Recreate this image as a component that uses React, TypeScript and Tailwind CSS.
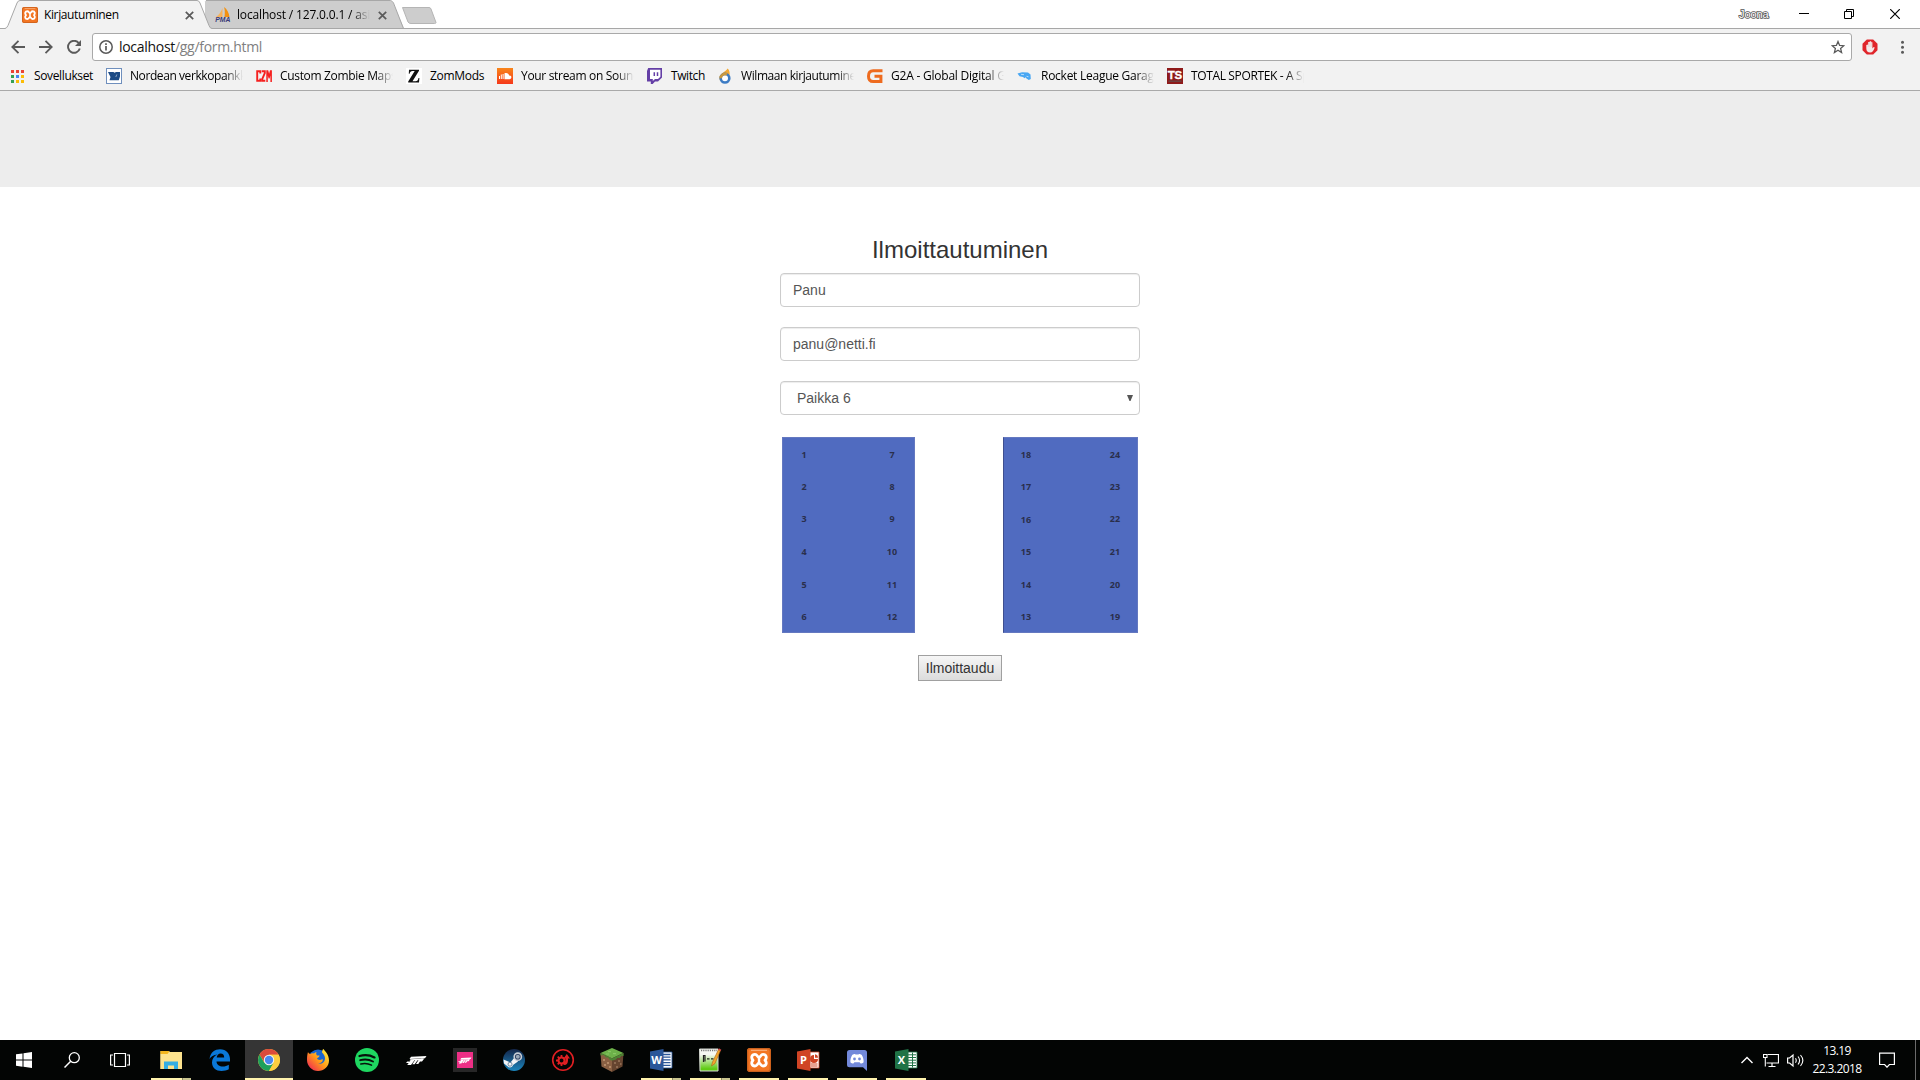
import React from "react";

type IconProps = { children: React.ReactNode; size?: number; box?: string; className?: string };

function Icon({ children, size = 16, box, className = "" }: IconProps) {
  return (
    <svg width={size} height={size} viewBox={box ?? `0 0 ${size} ${size}`} fill="none" className={`block shrink-0 ${className}`}>
      {children}
    </svg>
  );
}

const FADE = "[mask-image:linear-gradient(to_right,#000_calc(100%-18px),transparent)]";

/* ---------- small icons ---------- */

function XamppMark() {
  return (
    <g>
      <rect width="24" height="24" rx="3" fill="#f37623" />
      <rect x=".7" y=".7" width="22.6" height="22.6" rx="2.5" stroke="#c9601c" strokeWidth="1.2" />
      <path d="M4 2.3h16" stroke="#fbb98a" strokeWidth="1" />
      <path
        d="M8 6.300C10.300 6.300 10.300 9.200 12 9.200C13.700 9.200 13.700 6.300 16 6.300C19.400 6.300 20.200 9.800 18 12.200C20.200 14.600 19.400 18 16 18C13.700 18 13.700 15.200 12 15.200C10.300 15.200 10.300 18 8 18C4.600 18 3.800 14.600 6 12.200C3.800 9.800 4.600 6.300 8 6.300Z"
        stroke="#fff"
        strokeWidth="2.800"
        strokeLinejoin="round"
      />
      <path d="M12 9v6" stroke="#fff" strokeWidth="2.400" />
    </g>
  );
}

function CloseX() {
  return (
    <Icon size={9}>
      <path d="M.8.8l7.4 7.4M8.2.8L.8 8.2" stroke="#5a5a5a" strokeWidth="1.7" />
    </Icon>
  );
}

const bookmarks: { label: string; icon: React.ReactNode; width: string; track: string; fade?: boolean }[] = [
  {
    label: "Nordean verkkopankki",
    width: "w-[113px]",
    track: "tracking-[-0.42px]",
    fade: true,
    icon: (
      <Icon>
        <rect x=".5" y=".5" width="15" height="15" fill="#fff" stroke="#6f8fbd" />
        <path d="M2 4h5.500l1 .700L10 4h4v4.500l-1.200 3.700H3.500L4.500 9z" fill="#1d4b86" />
        <path d="M10.800 6.500L9.800 9" stroke="#fff" strokeWidth=".5" />
      </Icon>
    ),
  },
  {
    label: "Custom Zombie Maps",
    width: "w-[113px]",
    track: "tracking-[-0.33px]",
    fade: true,
    icon: (
      <Icon>
        <path d="M4.300 5.500V3.200H1.200v9.600h3.100v-2.300M5.800 3.200h3V5L6.300 11v1.800h3" stroke="#f5201f" strokeWidth="1.900" />
        <path d="M10.300 14V2.200h1.900l.900 3.500.900-3.500h1.900V14h-1.500V7.500l-.800 3h-1l-.800-3V14z" fill="#f5201f" />
      </Icon>
    ),
  },
  {
    label: "ZomMods",
    width: "w-[54px]",
    track: "tracking-[-0.3px]",
    icon: (
      <Icon>
        <rect width="16" height="16" fill="#fff" />
        <path d="M3 1.700h10v1L6.500 13.200H9.500c1.800 0 2.600-1 3-3.200h.9L13 14.600H2.200v-1L8.700 3H6.500C4.800 3 4 3.900 3.600 5.800h-.8z" fill="#111" />
      </Icon>
    ),
  },
  {
    label: "Your stream on SoundCloud",
    width: "w-[113px]",
    track: "tracking-[-0.32px]",
    fade: true,
    icon: (
      <Icon>
        <defs>
          <linearGradient id="sc" x1="0" y1="0" x2="0" y2="1">
            <stop stopColor="#f8851b" />
            <stop offset="1" stopColor="#f5381a" />
          </linearGradient>
        </defs>
        <rect width="16" height="16" fill="url(#sc)" />
        <path d="M2.500 8v3M4.300 6.500V11M6.100 6V11" stroke="#fff" />
        <path d="M7.500 11.200V5.300c2.400-1 4.300.3 4.600 2.300 3-.6 2.900 3.600.4 3.600z" fill="#fff" />
      </Icon>
    ),
  },
  {
    label: "Twitch",
    width: "w-[33px]",
    track: "tracking-[-0.4px]",
    icon: (
      <Icon>
        <path d="M1.200 0H15v9.500L11 13.500H8L5.700 16H3.800v-2.500H0V3z" fill="#643fa6" />
        <path d="M3 1.800h10.400v7L11 11H8l-2.200 2V11H3z" fill="#fff" />
        <path d="M7.300 4.300v3.800M10.500 4.300v3.800" stroke="#643fa6" strokeWidth="1.500" />
      </Icon>
    ),
  },
  {
    label: "Wilmaan kirjautuminen",
    width: "w-[113px]",
    track: "tracking-[-0.42px]",
    fade: true,
    icon: (
      <Icon>
        <path d="M10.500.5C10 2.500 7 3.500 4.800 5.500 2 8 2.200 11 3.200 12.800L12.500 7C13 5 12.500 2 10.500.5z" fill="#f1a835" />
        <circle cx="8" cy="10.200" r="4.300" fill="#fff" stroke="#3d7cc4" strokeWidth="2.600" />
        <path d="M3.700 10.200A4.300 4.300 0 0 1 10 6.400" stroke="#c9983f" strokeWidth="2.600" />
      </Icon>
    ),
  },
  {
    label: "G2A - Global Digital Gaming",
    width: "w-[113px]",
    track: "tracking-[-0.22px]",
    fade: true,
    icon: (
      <Icon>
        <path d="M15.500 2.800H6.200C3 2.800 1.500 4.800 1.500 8.200s1.500 5.300 4.700 5.300h7.700V8.200H7.500" stroke="#ee6b1f" strokeWidth="3" />
      </Icon>
    ),
  },
  {
    label: "Rocket League Garage",
    width: "w-[113px]",
    track: "tracking-[-0.26px]",
    fade: true,
    icon: (
      <Icon>
        <path d="M.5 5.500L5 4.200l6 .300 2.500 2 .300 4.500-2 1-2.300-1.500-1-1.200-1 1-1.500-1.300L2.500 8.300z" fill="#49a7f3" />
        <path d="M4 6.300l3 .4M9.500 8.300l2 .5" stroke="#b4dbfa" />
      </Icon>
    ),
  },
  {
    label: "TOTAL SPORTEK - A Sports",
    width: "w-[113px]",
    track: "tracking-[-0.36px]",
    fade: true,
    icon: (
      <Icon>
        <rect width="16" height="16" fill="#8f1a1a" />
        <text x="7.800" y="11" textAnchor="middle" fontFamily="Liberation Sans" fontWeight="700" fontSize="11.500" fill="#fff" stroke="#fff" strokeWidth=".3" letterSpacing="-.4">
          TS
        </text>
        <path d="M1.500 13.200h13" stroke="#6d4444" strokeWidth="1.500" />
      </Icon>
    ),
  },
];

/* ---------- browser chrome ---------- */

function TabStrip() {
  return (
    <div className="relative flex h-[29px] items-start bg-white">
      <svg width="1920" height="29" viewBox="0 0 1920 29" fill="none" className="absolute left-0 top-0">
        <path d="M205 1.500L206 .500H390.500L393 2.500L404 28.500H205z" fill="#cdcdcd" />
        <path d="M0 28.500H1920" stroke="#a7a7a7" />
        <path d="M206 .500H390.500Q392.500 1 393.500 3L403.500 28.500H211" stroke="#a7a7a7" />
        <path d="M0 28.500H5Q7 28 8 25.500L17 3Q18 .500 20 .500H197Q199 .500 200 3L209 25.500Q210 28.500 212 28.500V29.500H0z" fill="#f2f2f2" />
        <path d="M0 28.500H5Q7 28 8 25.500L17 3Q18 .500 20 .500H197Q199 .500 200 3L209 25.500Q210 28.500 212 28.500" stroke="#a7a7a7" />
        <path d="M402.500 7.500H429Q430.500 7.500 431 9L436 22.500Q436 23.500 434.500 23.500H411Q409 23.500 408 22z" fill="#cdcdcd" stroke="#b5b5b5" />
      </svg>
      <div className="relative flex h-[29px] w-[194px] items-center pl-[22px] pt-px">
        <Icon box="0 0 24 24">
          <XamppMark />
        </Icon>
        <span className="ml-[6px] w-[141px] text-[12px] tracking-[-0.38px]">Kirjautuminen</span>
        <CloseX />
      </div>
      <div className="relative ml-[21px] flex h-[29px] w-[178px] items-center pt-px">
        <Icon>
          <path d="M7.500 1v9H1C4 8 6 5 7.500 1z" fill="#f7b35c" />
          <path d="M9 0c3 2 5 6 5.500 10H9.500C10 6 10 3 9 0z" fill="#f29111" />
          <text x="7.800" y="15.400" textAnchor="middle" fontFamily="Liberation Sans" fontStyle="italic" fontWeight="700" fontSize="6.800" fill="#3a3a78">
            PMA
          </text>
        </Icon>
        <span className={`ml-[6px] w-[133px] overflow-hidden whitespace-nowrap text-[12px] tracking-[-0.16px] ${FADE}`}>
          localhost / 127.0.0.1 / asiakas
        </span>
        <span className="ml-[8px]">
          <CloseX />
        </span>
      </div>
      <div className="relative ml-auto flex h-[28px] items-center">
        <span className="mr-[29px] w-[31px] font-['Liberation_Sans',sans-serif] text-[11px] tracking-[-0.1px] text-white [-webkit-text-stroke:1.6px_#555] [paint-order:stroke_fill]">Joona</span>
        <Icon size={10}>
          <path d="M0 4.500h10" stroke="#000" />
        </Icon>
        <Icon size={10} className="ml-[35px]">
          <path d="M.500 2.500h7v7h-7zM2.500 2.500v-2h7v7h-2" stroke="#000" />
        </Icon>
        <Icon size={10} className="ml-[36px] mr-[20px]">
          <path d="M.200.200l9.600 9.600M9.800.200L.200 9.800" stroke="#000" strokeWidth="1.200" />
        </Icon>
      </div>
    </div>
  );
}

function Toolbar() {
  return (
    <div className="flex h-[36px] items-center bg-[#f2f2f2] pl-[11px]">
      <Icon size={14}>
        <path d="M14 7H1.500M7.500.800L1.300 7l6.200 6.200" stroke="#5a5a5a" strokeWidth="1.800" />
      </Icon>
      <Icon size={14} className="ml-[14px]">
        <path d="M0 7h12.500M6.500.800L12.700 7l-6.200 6.200" stroke="#5a5a5a" strokeWidth="1.800" />
      </Icon>
      <Icon size={14} className="ml-[14px]">
        <path d="M11.700 3A6 6 0 1 0 12.800 8.500" stroke="#5a5a5a" strokeWidth="1.900" />
        <path d="M14 0v6H8z" fill="#5a5a5a" />
      </Icon>
      <div className="ml-[11px] flex h-[28px] w-[1760px] items-center rounded-[3px] border border-[#a9a9a9] bg-white pl-[6px] pr-[6px]">
        <Icon size={14}>
          <circle cx="7" cy="7" r="6.200" stroke="#5a5a5a" strokeWidth="1.500" />
          <path d="M7 6v4.500M7 3.300v1.600" stroke="#5a5a5a" strokeWidth="1.700" />
        </Icon>
        <span className="ml-[6px] text-[14px] leading-none tracking-[-0.3px] text-[#111]">
          localhost<span className="text-[#808080]">/gg/form.html</span>
        </span>
        <Icon size={14} className="ml-auto">
          <path d="M7 1.500l1.600 3.900 4.200.300-3.200 2.700 1 4.100L7 10.300l-3.600 2.200 1-4.100L1.200 5.700l4.200-.300z" stroke="#5a5a5a" strokeWidth="1.300" />
        </Icon>
      </div>
      <Icon className="ml-[10px]">
        <path d="M4.800.500h6.400l4.300 4.300v6.400l-4.300 4.300H4.800L.500 11.200V4.800z" fill="#e0252b" />
        <path d="M4.300 6v3.200c0 3 1.500 4.300 3.800 4.300 2.500 0 3.300-1.500 4.600-5l-1-.500-1.300 1.500V3.300H9.200V2.300H7.700V3H6.200v2.500z" fill="#f4eaea" />
        <path d="M6.300 4v4M7.900 3v5M9.400 4v4" stroke="#e5b3b3" strokeWidth=".4" />
      </Icon>
      <Icon size={14} className="ml-[17px]">
        <circle cx="7.500" cy="2.300" r="1.500" fill="#5a5a5a" />
        <circle cx="7.500" cy="7.300" r="1.500" fill="#5a5a5a" />
        <circle cx="7.500" cy="12.300" r="1.500" fill="#5a5a5a" />
      </Icon>
    </div>
  );
}

function Bookmarks() {
  const colors = ["#ea4335", "#ea4335", "#ea4335", "#34a053", "#4285f4", "#fbbc05", "#34a053", "#fbbc05", "#fbbc05"];
  return (
    <div className="flex h-[26px] items-center border-b border-[#a9a9a9] bg-[#f2f2f2] pb-[3px] pl-[11px] text-[12px] leading-[16px] text-black">
      <Icon size={13}>
        {colors.map((c, i) => (
          <rect key={i} x={(i % 3) * 5} y={Math.floor(i / 3) * 5} width="3" height="3" fill={c} />
        ))}
      </Icon>
      <span className="ml-[10px] w-[59px] whitespace-nowrap tracking-[-0.36px]">Sovellukset</span>
      {bookmarks.map((b) => (
        <div key={b.label} className="ml-[13px] flex items-center gap-[8px]">
          {b.icon}
          <span className={`whitespace-nowrap ${b.width} ${b.track} ${b.fade ? `overflow-hidden ${FADE}` : ""}`}>{b.label}</span>
        </div>
      ))}
    </div>
  );
}

/* ---------- page ---------- */

const ROWS = ["h-[33px]", "h-[31px]", "h-[34px]", "h-[32px]", "h-[33px]", "h-[31px]"];

function SeatColumn({ seats, className = "" }: { seats: number[]; className?: string }) {
  return (
    <div className={`flex w-[20px] flex-col text-center font-['Open_Sans',sans-serif] text-[9px] leading-[12px] font-bold text-[#2a2f4c] ${className}`}>
      {seats.map((s, i) => (
        <span key={s} className={`flex items-center justify-center ${ROWS[i]}`}>
          {s}
        </span>
      ))}
    </div>
  );
}

function SignupForm() {
  const field = "flex h-[34px] w-full items-center rounded-[4px] border border-[#ccc] bg-white text-[14px] text-[#555] shadow-[inset_0_1px_1px_rgba(0,0,0,0.075)]";
  return (
    <main className="flex flex-1 flex-col items-center bg-white pt-[50px] font-['Liberation_Sans',Arial,sans-serif]">
      <div className="flex w-[360px] flex-col items-center">
        <h3 className="mb-[10px] text-[24px] leading-[26px] text-[#333]">Ilmoittautuminen</h3>
        <div className={`${field} mb-[20px] px-[12px]`}>Panu</div>
        <div className={`${field} mb-[20px] px-[12px]`}>panu@netti.fi</div>
        <div className={`${field} justify-between pl-[16px] pr-[6px]`}>
          Paikka 6
          <Icon size={6}>
            <path d="M0 0h6L3.500 6h-1z" fill="#555" />
          </Icon>
        </div>
        <div className="mt-[22px] flex h-[196px] w-full justify-between pl-[2px] pr-[2px]">
          <div className="flex w-[133px] justify-between border border-[#6478c0] bg-[#506bc0] pl-[11px] pr-[12px]">
            <SeatColumn seats={[1, 2, 3, 4, 5, 6]} />
            <SeatColumn seats={[7, 8, 9, 10, 11, 12]} />
          </div>
          <div className="flex w-[135px] justify-between border border-[#6478c0] border-l-[#3f4f8f] bg-[#506bc0] pl-[12px] pr-[12px]">
            <SeatColumn seats={[18, 17, 16, 15, 14, 13]} className="pt-px" />
            <SeatColumn seats={[24, 23, 22, 21, 20, 19]} />
          </div>
        </div>
        <button className="mt-[22px] h-[26px] w-[84px] border border-[#a0a0a0] bg-linear-to-b from-[#f6f6f6] to-[#dcdcdc] text-[14px] leading-none text-[#333]">
          Ilmoittaudu
        </button>
      </div>
    </main>
  );
}

/* ---------- taskbar ---------- */

function OfficeIcon({ letter, dark, light, children }: { letter: string; dark: string; light: string; children: React.ReactNode }) {
  return (
    <Icon size={24}>
      <path d="M12 4h11v16H12z" fill="#fff" stroke={light} strokeWidth=".8" />
      {children}
      <path d="M1 3.500L14.500 1v22L1 20.500z" fill={dark} />
      <text x="7.500" y="16" textAnchor="middle" fontFamily="Open Sans" fontWeight="700" fontSize="11" fill="#fff">
        {letter}
      </text>
    </Icon>
  );
}

/* Slanted double-bar "F" with two trailing strokes. */
function ForzaMark({ scale, x, y }: { scale: number; x: number; y: number }) {
  return (
    <g transform={`translate(${x} ${y}) scale(${scale})`} fill="#fff">
      <path d="M5 .800L20.500 0 19 2.300 3.500 2.900z" />
      <path d="M4.500 3.200L17 2.600 15 4.300H8.500L5 9H1.200l1.500-2H0l1.300-1.500h2.500l.8-1H3.500z" />
      <path d="M9.200 4L11.700 4 8.700 8.300H6.300zM12.500 4H15l-2.700 4H10zM15.500 2.500h2.800L16 5.500h-2.500z" />
    </g>
  );
}

const tasks: { name: string; icon: React.ReactNode; open?: boolean; multi?: boolean; active?: boolean }[] = [
  {
    name: "explorer",
    open: true,
    multi: true,
    icon: (
      <Icon size={24}>
        <path d="M1.500 3h8.500l1.500 1.500H23V21H1.500z" fill="#fde38e" />
        <path d="M1.500 3h8.500v3H1.500z" fill="#f3b61f" />
        <path d="M1.500 6h7l1.500-2h13v17H1.500z" fill="#fde38e" />
        <path d="M5 21v-7.500h14V21h-4v-3.500H9V21z" fill="#35aee4" />
      </Icon>
    ),
  },
  {
    name: "edge",
    icon: (
      <Icon size={24}>
        <path
          d="M1.500 11C2.500 4 7 1.200 12 1.200c6.500 0 10 4.800 10 9.800v2.500H8.500c.2 3.500 3 5 6.300 5 2.200 0 4.200-.700 6-1.800v4.600c-2 1.200-4.500 1.700-7.300 1.700C8 23 4 19.700 4 14.500c0-3.700 2-6.500 5.500-8C5.500 6.700 3 8.500 1.500 11zm7.200-1.500h7.500c0-2.500-1.200-4-3.700-4-2.100 0-3.500 1.700-3.800 4z"
          fill="#0a78d7"
        />
      </Icon>
    ),
  },
  {
    name: "chrome",
    open: true,
    active: true,
    icon: (
      <Icon size={24}>
        <circle cx="12" cy="12" r="11" fill="#fccd3f" />
        <path d="M2.500 6.500A11 11 0 0 1 21.600 6.800H12L7.500 14.600z" fill="#db4a3b" />
        <path d="M2.500 6.500L7.300 14.700h9.400L12 23A11 11 0 0 1 2.500 6.500z" fill="#1da05c" />
        <path d="M21.600 6.800H12l4.700 7.900L12 23A11 11 0 0 0 21.600 6.800z" fill="#fccd3f" />
        <circle cx="12" cy="12" r="5.200" fill="#f4f4f4" />
        <circle cx="12" cy="12" r="4.200" fill="#4a87ee" />
      </Icon>
    ),
  },
  {
    name: "firefox",
    icon: (
      <Icon size={24}>
        <defs>
          <linearGradient id="ff" x1="1" y1="0" x2="0" y2="1">
            <stop offset=".1" stopColor="#ffe83b" />
            <stop offset=".5" stopColor="#ff9a1a" />
            <stop offset="1" stopColor="#ee1260" />
          </linearGradient>
        </defs>
        <circle cx="12" cy="11" r="9.500" fill="#1766d2" />
        <path
          d="M2 4c.5 1 1 1.500 2 2 1-.700 2.400-.800 4-.500.800-.800 1.500-1.200 2.500-1.500-.6 1.500-.2 2.500.5 3.500h2.500c0 1.400-1.500 2-2.500 3 .5 1.700 3.500 1.800 5.500.5 1 2.500-1.500 4.500-4.500 4.300 3 1.500 6.500-.800 7-4.300.3-3-1.500-5-3-6.500 0-1.500.5-3 1.500-3.500 1 2 5.500 5 5.500 11.500C23 18.500 18 23 12 23S1 18 1 12c0-3 .2-5.500 1-8z"
          fill="url(#ff)"
        />
      </Icon>
    ),
  },
  {
    name: "spotify",
    icon: (
      <Icon size={24}>
        <circle cx="12" cy="12" r="12" fill="#1ed760" />
        <path d="M4.500 8c5-1.500 10.500-1 15 1.400" stroke="#07120b" strokeWidth="2.300" strokeLinecap="round" />
        <path d="M5.200 12.200c4.300-1.300 9-.8 12.800 1.300" stroke="#07120b" strokeWidth="1.900" strokeLinecap="round" />
        <path d="M5.800 16c3.800-1 7.400-.6 10.700 1.200" stroke="#07120b" strokeWidth="1.500" strokeLinecap="round" />
      </Icon>
    ),
  },
  {
    name: "forza",
    icon: (
      <Icon size={24}>
        <ForzaMark scale={1} x={2} y={8} />
      </Icon>
    ),
  },
  {
    name: "forza hub",
    icon: (
      <Icon size={24}>
        <path d="M0 0h24v24H0z" fill="#272727" />
        <path d="M4 4h16v16H4z" fill="#ee2f86" />
        <ForzaMark scale={0.66} x={5} y={9.5} />
      </Icon>
    ),
  },
  {
    name: "steam",
    icon: (
      <Icon size={24}>
        <defs>
          <linearGradient id="st" x1="0" y1="0" x2="0" y2="1">
            <stop stopColor="#14264a" />
            <stop offset="1" stopColor="#1b86bd" />
          </linearGradient>
        </defs>
        <circle cx="12" cy="12" r="11" fill="url(#st)" />
        <path d="M1.500 11.500l7 3 4-5 3.500 4-5 3.500c-.5 2.300-3.500 3.500-5.500 1.300L2 15.500z" fill="#f2f4f6" />
        <circle cx="15.800" cy="8.700" r="3.600" fill="#22355a" stroke="#c6ced6" strokeWidth="1.600" />
        <circle cx="15.800" cy="8.700" r="2" fill="#9aa9b8" />
        <circle cx="8" cy="16.200" r="2" stroke="#52708d" strokeWidth=".8" />
      </Icon>
    ),
  },
  {
    name: "tuner",
    icon: (
      <Icon size={24}>
        <circle cx="12" cy="12" r="10.300" stroke="#e01f22" strokeWidth="1.600" />
        <circle cx="10.500" cy="12.500" r="3" stroke="#e01f22" strokeWidth="2" />
        <path d="M10.500 7v2M10.500 16v2M5 12.500H7.500M6.700 8.700l1.500 1.500M6.700 16.300l1.500-1.500" stroke="#e01f22" strokeWidth="1.800" />
        <path d="M12.500 17c3 .5 4.500-1.800 4.500-4.500V10.500h2L15.800 6 12.500 10.500H14.500c0 2 0 3.500-2 4.500z" fill="#e01f22" />
      </Icon>
    ),
  },
  {
    name: "minecraft",
    icon: (
      <Icon size={24}>
        <path d="M12 0l11.500 5L12 10.500.500 5z" fill="#6db14a" />
        <path d="M.500 5L12 10.500V24L1.500 18.500z" fill="#8a6043" />
        <path d="M23.500 5L12 10.500V24l10.500-5.500z" fill="#664530" />
        <path d="M.500 5L12 10.500l11.500-5.500v3l-2-.2-2 2.200-2-.200-2 2-3.500.700-2-.500-2-2.500-2 0-2-2.200H.500z" fill="#4c8434" />
        <path d="M3 11h2v2H3zM7 14h2v2H7zM4 16h2v2H4zM9 18h2v2H9z" fill="#b48a68" />
        <path d="M14 14h2v2h-2zM18 12h2v2h-2zM16 18h2v2h-2zM20 15h1.500v2H20z" fill="#8d6a50" />
        <path d="M8 3h3v1.300H8zM13 5h3v1.200h-3zM6 5.500h3v1H6z" fill="#87c763" />
      </Icon>
    ),
  },
  {
    name: "word",
    open: true,
    multi: true,
    icon: (
      <OfficeIcon letter="W" dark="#2a5699" light="#2a5699">
        <path d="M14 6.500h7.500M14 9.200h7.500M14 11.900h7.500M14 14.600h7.500M14 17.300h7.500" stroke="#2a5699" strokeWidth="1.300" />
      </OfficeIcon>
    ),
  },
  {
    name: "notepad",
    open: true,
    multi: true,
    icon: (
      <Icon size={24}>
        <defs>
          <linearGradient id="np" x1="0" y1="0" x2="0" y2="1">
            <stop offset=".25" stopColor="#f6f8f3" />
            <stop offset=".9" stopColor="#5fcb14" />
          </linearGradient>
        </defs>
        <path d="M1.500 1H20v22H2z" fill="url(#np)" stroke="#d5d8d2" />
        <path d="M3 2.500h16" stroke="#777" strokeWidth="1.500" strokeDasharray="1.200 1" />
        <path d="M5.500 7v7M5 7.500h2v6M9 10.800h2.500M13 10.800h2.500" stroke="#222" strokeWidth="1.200" />
        <path d="M13.500 18l1-4L20.500 1.500l2 1L17 15.500z" fill="#f2a52c" stroke="#a8641b" strokeWidth=".6" />
        <path d="M20.500 1l2.500 1.300" stroke="#d14545" strokeWidth="1.500" />
      </Icon>
    ),
  },
  {
    name: "xampp",
    open: true,
    icon: (
      <Icon size={24}>
        <XamppMark />
      </Icon>
    ),
  },
  {
    name: "powerpoint",
    open: true,
    icon: (
      <OfficeIcon letter="P" dark="#d04424" light="#d04424">
        <path d="M18 7v4h4a4 4 0 1 1-4-4z" fill="#d04424" />
        <path d="M19 6.200a3.500 3.500 0 0 1 3 3.500h-3z" fill="#d04424" />
        <path d="M15 16h6.500M15 18h6.500" stroke="#d04424" strokeWidth="1.100" />
      </OfficeIcon>
    ),
  },
  {
    name: "discord",
    open: true,
    icon: (
      <Icon size={24}>
        <path d="M4.500 2h15A2.500 2.500 0 0 1 22 4.500V23l-4-3.800H4.500A2.500 2.500 0 0 1 2 16.700V4.500A2.500 2.500 0 0 1 4.500 2z" fill="#7289da" />
        <path d="M7.200 7c1-.800 2-1 2.800-1.100l.5.700h3l.5-.700c.900.100 1.800.300 2.800 1.100 1.300 2.300 2 4.700 1.800 7.200-1 1-2 1.300-3 1.400l-1-1.300H9.400l-1 1.300c-1-.100-2-.400-3-1.400C5.200 11.700 5.900 9.300 7.200 7z" fill="#fff" />
        <circle cx="9.500" cy="11" r="1.400" fill="#7289da" />
        <circle cx="14.500" cy="11" r="1.400" fill="#7289da" />
      </Icon>
    ),
  },
  {
    name: "excel",
    open: true,
    icon: (
      <OfficeIcon letter="X" dark="#207346" light="#207346">
        <path d="M14 6.800h8M14 9.500h8M14 12.200h8M14 14.900h8M14 17.500h8M18.500 4.500v15" stroke="#207346" strokeWidth="1" />
      </OfficeIcon>
    ),
  },
];

function Taskbar() {
  return (
    <footer className="flex h-[40px] items-stretch bg-[#030504] text-white">
      <div className="flex w-[147px] items-center">
        <Icon className="ml-[16px]">
          <path d="M0 2.300L6.500 1.400V7.600H0zM7.500 1.200L16 0v7.600H7.500zM0 8.500h6.500v6.200L0 13.800zM7.500 8.500H16V16l-8.500-1.200z" fill="#fff" />
        </Icon>
        <Icon className="ml-[32px]">
          <circle cx="10.300" cy="5.700" r="5" stroke="#fff" strokeWidth="1.300" />
          <path d="M6.700 9.300L.5 15.500" stroke="#fff" strokeWidth="1.500" />
        </Icon>
        <Icon size={20} className="ml-[30px]">
          <path d="M4.500 3.500h11v13h-11z" stroke="#fff" strokeWidth="1.200" />
          <path d="M3 5H.600v10H3M17 5h2.400v10H17" stroke="#fff" strokeWidth="1.200" />
        </Icon>
      </div>
      {tasks.map((t) => (
        <div key={t.name} className={`mr-px flex w-[48px] flex-col items-center ${t.active ? "bg-[#353535]" : ""}`}>
          <div className="flex h-[38px] items-center pt-[2px] pr-px">{t.icon}</div>
          {t.open && (
            <div className={`flex h-[2px] ${t.active ? "w-[48px]" : "w-[40px]"}`}>
              <span className="flex-1 bg-[#fff3ad]" />
              {t.multi && <span className="w-[9px] border-l border-[#8e8965] bg-[#c9c48f]" />}
            </div>
          )}
        </div>
      ))}
      <div className="ml-auto flex items-center">
        <Icon size={12}>
          <path d="M.500 9L6 3.500 11.500 9" stroke="#fff" strokeWidth="1.400" />
        </Icon>
        <Icon className="ml-[10px]">
          <path d="M4.500 2.500H15.500v8.500H3.500M9 11v3M5.500 14.500h7" stroke="#fff" strokeWidth="1.200" />
          <path d="M.500 2.500h3.500v3H.500zM2.300 5.500v9" stroke="#fff" strokeWidth="1.100" />
        </Icon>
        <Icon size={17} className="ml-[8px]">
          <path d="M.600 6h2L6 3v11l-3.400-3H.600z" stroke="#fff" strokeWidth="1.200" />
          <path d="M8.500 6.200c1 1.500 1 3 0 4.600M11 4.500c2 2.500 2 5.500 0 8M13.500 3c3 3.500 3 7.500 0 11" stroke="#fff" strokeWidth="1.100" />
        </Icon>
        <div className="ml-[8px] flex w-[50px] flex-col items-center whitespace-nowrap text-[12px] leading-[18px] tracking-[-0.6px]">
          <span>13.19</span>
          <span>22.3.2018</span>
        </div>
        <Icon className="ml-[17px] mr-[20px]">
          <path d="M.600 1.200h14.800v11.300h-5L8 15.200l-2.400-2.700h-5z" stroke="#fff" strokeWidth="1.200" />
        </Icon>
        <div className="mr-[4px] h-full w-px bg-[#6b6b6b]" />
      </div>
    </footer>
  );
}

export default function App() {
  return (
    <div className="flex h-[1080px] w-[1920px] flex-col overflow-hidden bg-white font-['Open_Sans','Noto_Sans',sans-serif]">
      <TabStrip />
      <Toolbar />
      <Bookmarks />
      <div className="h-[96px] bg-[#ededed]" />
      <SignupForm />
      <Taskbar />
    </div>
  );
}
